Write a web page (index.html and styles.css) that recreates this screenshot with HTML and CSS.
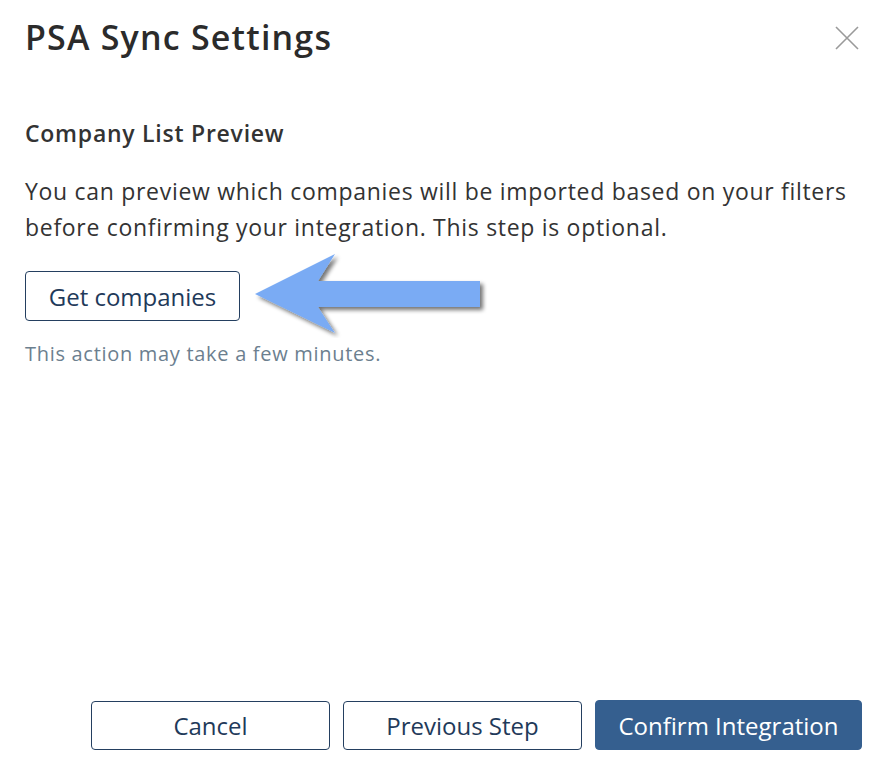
FILE: index.html
```html
<!DOCTYPE html>
<html>
<head>
<meta charset="utf-8">
<link rel="stylesheet" href="styles.css">
</head>
<body>
<div class="modal">
  <header class="modal-header">
    <h1 class="modal-title">PSA Sync Settings</h1>
    <button class="close-btn" aria-label="Close">
      <svg width="24" height="24" viewBox="0 0 24 24"><path d="M1 1 L23 23 M23 1 L1 23" stroke="#9a9a9a" stroke-width="1.6" fill="none"/></svg>
    </button>
  </header>
  <main class="modal-body">
    <h2 class="section-title">Company List Preview</h2>
    <p class="description">You can preview which companies will be imported based on your filters before confirming your integration. This step is optional.</p>
    <div class="action-row">
      <button class="btn btn-outline get-btn">Get companies</button>
      <svg class="arrow" width="240" height="90" viewBox="250 248 240 90">
        <defs>
          <filter id="sh" x="-10%" y="-20%" width="130%" height="150%">
            <feGaussianBlur in="SourceAlpha" stdDeviation="2"/>
            <feOffset dx="3" dy="3" result="b"/>
            <feComponentTransfer><feFuncA type="linear" slope="0.55"/></feComponentTransfer>
            <feMerge><feMergeNode/><feMergeNode in="SourceGraphic"/></feMerge>
          </filter>
        </defs>
        <polygon points="255,294 335,254 318,281 480,281 480,307 318,307 335,333" fill="#7aabf4" filter="url(#sh)"/>
      </svg>
    </div>
    <p class="hint">This action may take a few minutes.</p>
  </main>
  <footer class="modal-footer">
    <button class="btn btn-outline footer-btn">Cancel</button>
    <button class="btn btn-outline footer-btn">Previous Step</button>
    <button class="btn btn-primary footer-btn confirm">Confirm Integration</button>
  </footer>
</div>
</body>
</html>
```

FILE: styles.css
```css
html, body {
  margin: 0;
  padding: 0;
  background: #fff;
}
body {
  font-family: "Open Sans", "Liberation Sans", sans-serif;
  color: #333;
}
.modal {
  width: 884px;
  height: 772px;
  box-sizing: border-box;
  display: flex;
  flex-direction: column;
  padding: 0 22px 22px 25px;
}
.modal-header {
  display: flex;
  justify-content: space-between;
  align-items: flex-start;
  padding-top: 14px;
}
.modal-title {
  margin: 0;
  font-size: 34px;
  font-weight: 600;
  line-height: 46px;
  color: #2b2b2b;
  letter-spacing: 1.2px;
}
.close-btn {
  border: none;
  background: none;
  padding: 0;
  margin-top: 12px;
  margin-right: 3px;
  width: 24px;
  height: 24px;
  cursor: pointer;
}
.close-btn svg { display: block; }
.modal-body {
  flex: 1;
  padding-top: 58px;
}
.section-title {
  margin: 0;
  font-size: 23px;
  font-weight: 600;
  line-height: 30px;
  color: #333;
  letter-spacing: 0.75px;
}
.description {
  margin: 25px 0 0;
  font-size: 23px;
  line-height: 36px;
  color: #333;
  letter-spacing: 0.7px;
}
.action-row {
  margin-top: 26px;
  display: flex;
  align-items: center;
  position: relative;
  height: 50px;
}
.arrow {
  position: absolute;
  left: 225px;
  top: -23px;
}
.btn {
  font-family: "Open Sans", "Liberation Sans", sans-serif;
  font-size: 24px;
  border-radius: 4px;
  box-sizing: border-box;
  height: 50px;
  cursor: pointer;
}
.btn-outline {
  background: #fff;
  border: 1px solid #243f60;
  color: #1f3a5a;
}
.btn-primary {
  background: #355f8f;
  border: 1px solid #355f8f;
  color: #fff;
}
.get-btn {
  width: 215px;
  padding: 0;
}
.hint {
  margin: 20px 0 0;
  font-size: 20px;
  line-height: 26px;
  color: #6c7f8f;
  letter-spacing: 0.7px;
}
.modal-footer {
  display: flex;
  justify-content: flex-end;
  align-items: flex-end;
  gap: 13px;
}
.footer-btn {
  width: 239px;
  padding: 0;
  height: 49px;
}
.confirm {
  width: 267px;
  height: 50px;
}
```
